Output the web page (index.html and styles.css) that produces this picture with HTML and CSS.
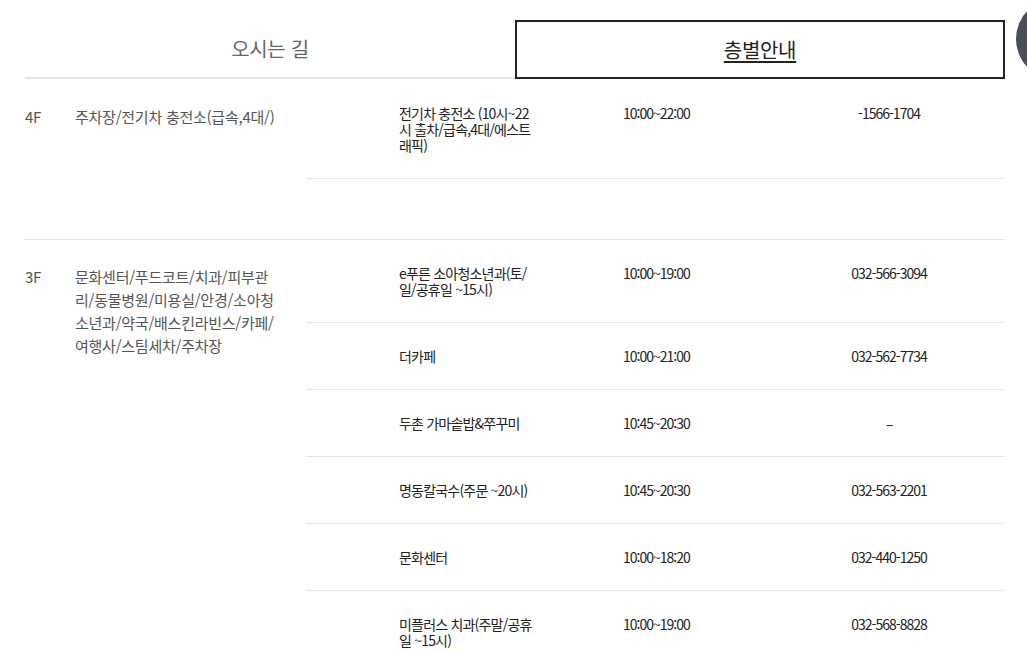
FILE: index.html
```html
<!DOCTYPE html>
<html lang="ko">
<head>
<meta charset="utf-8">
<title>층별안내</title>
<link rel="stylesheet" href="styles.css">
</head>
<body>
<div class="page">
  <div class="tabs">
    <div class="tab">오시는 길</div>
    <div class="tab tab-active"><span>층별안내</span></div>
  </div>

  <div class="floor">
    <div class="floor-name">4F</div>
    <div class="floor-desc">주차장/전기차 충전소(급속,4대/)</div>
    <div class="shops">
      <div class="shop">
        <div class="shop-name">전기차 충전소 (10시~22시 출차/급속,4대/에스트래픽)</div>
        <div class="shop-time">10:00~22:00</div>
        <div class="shop-tel">-1566-1704</div>
      </div>
    </div>
  </div>

  <div class="floor">
    <div class="floor-name">3F</div>
    <div class="floor-desc">문화센터/푸드코트/치과/피부관리/동물병원/미용실/안경/소아청소년과/약국/배스킨라빈스/카페/여행사/스팀세차/주차장</div>
    <div class="shops">
      <div class="shop">
        <div class="shop-name">e푸른 소아청소년과(토/일/공휴일 ~15시)</div>
        <div class="shop-time">10:00~19:00</div>
        <div class="shop-tel">032-566-3094</div>
      </div>
      <div class="shop">
        <div class="shop-name">더카페</div>
        <div class="shop-time">10:00~21:00</div>
        <div class="shop-tel">032-562-7734</div>
      </div>
      <div class="shop">
        <div class="shop-name">두촌 가마솥밥&amp;쭈꾸미</div>
        <div class="shop-time">10:45~20:30</div>
        <div class="shop-tel">–</div>
      </div>
      <div class="shop">
        <div class="shop-name">명동칼국수(주문 ~20시)</div>
        <div class="shop-time">10:45~20:30</div>
        <div class="shop-tel">032-563-2201</div>
      </div>
      <div class="shop">
        <div class="shop-name">문화센터</div>
        <div class="shop-time">10:00~18:20</div>
        <div class="shop-tel">032-440-1250</div>
      </div>
      <div class="shop">
        <div class="shop-name">미플러스 치과(주말/공휴일 ~15시)</div>
        <div class="shop-time">10:00~19:00</div>
        <div class="shop-tel">032-568-8828</div>
      </div>
    </div>
  </div>
</div>
<div class="float-btn"></div>
</body>
</html>
```

FILE: styles.css
```css
html, body {
  margin: 0;
  padding: 0;
  background: #fff;
  overflow: hidden;
}

body {
  font-family: "Noto Sans CJK KR", "Noto Sans", sans-serif;
  color: #333;
}

.page {
  width: 980px;
  margin-left: 25px;
  padding-top: 20px;
}

.tabs {
  display: grid;
  grid-template-columns: 490px 490px;
  margin-bottom: 1px;
}

.tab {
  height: 57px;
  display: flex;
  align-items: center;
  justify-content: center;
  font-size: 20px;
  color: #666;
  border-bottom: 2px solid #e6e6e6;
  letter-spacing: -0.3px;
}

.tab-active {
  border: 2px solid #222;
  height: 55px;
  color: #222;
}

.tab-active span {
  text-decoration: underline;
  text-underline-offset: 3px;
}

.floor {
  display: grid;
  grid-template-columns: 50px 231px 699px;
  border-bottom: 1px solid #e6e6e6;
}

.floor-name,
.floor-desc {
  padding-top: 25px;
  font-size: 15px;
  line-height: 23px;
  color: #555;
  letter-spacing: -0.25px;
}

.floor-desc {
  width: 206px;
  word-break: break-all;
}

.shops {
  padding-bottom: 60px;
}

.shop {
  display: grid;
  grid-template-columns: 93px 224px 150px 232px;
  padding: 25px 0;
  border-bottom: 1px solid #e6e6e6;
  font-size: 14px;
  line-height: 16px;
  color: #222;
  letter-spacing: -1px;
}

.shop-name {
  grid-column: 2;
  width: 140px;
  word-break: break-all;
  letter-spacing: -0.8px;
}

.shop-time {
  grid-column: 3;
}

.shop-tel {
  grid-column: 4;
  text-align: center;
}

.float-btn {
  position: absolute;
  top: -2px;
  left: 1016px;
  width: 82px;
  height: 82px;
  border-radius: 50%;
  background: #4a4e57;
}
```
